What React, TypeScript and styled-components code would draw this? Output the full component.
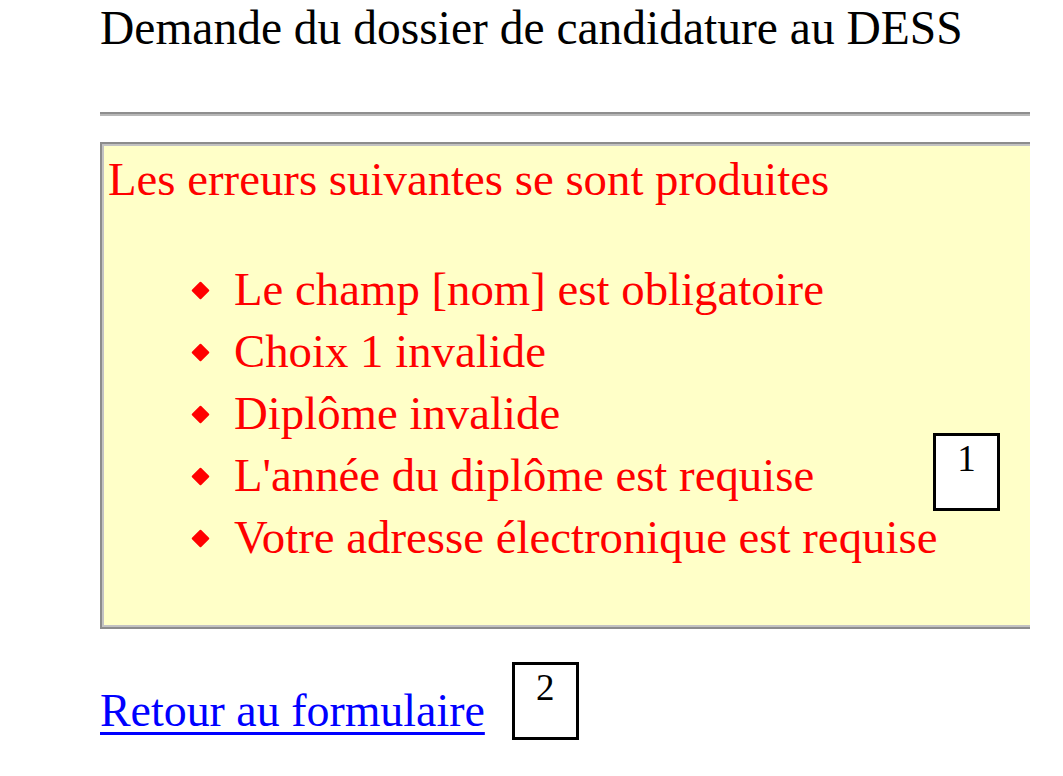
import React from "react";
import styled, { createGlobalStyle } from "styled-components";

const GlobalStyle = createGlobalStyle`
  html, body {
    margin: 0;
    padding: 0;
    background: #ffffff;
  }
  body {
    font-family: "Liberation Serif", "Times New Roman", serif;
  }
`;

const errors = [
  "Le champ [nom] est obligatoire",
  "Choix 1 invalide",
  "Diplôme invalide",
  "L'année du diplôme est requise",
  "Votre adresse électronique est requise",
];

const Page = styled.div`
  width: 1030px;
  overflow: hidden;
  padding-left: 100px;
  box-sizing: border-box;
`;

const Title = styled.div`
  font-size: 47.5px;
  line-height: 56px;
  color: #000000;
  white-space: nowrap;
`;

const Rule = styled.div`
  margin-top: 56px;
  height: 0;
  border-top: 2px solid #8e8e8e;
  border-bottom: 2px solid #b8b8b8;
`;

const ErrorBox = styled.div`
  position: relative;
  margin-top: 26px;
  width: 1000px;
  height: 487px;
  box-sizing: border-box;
  border: 2px solid #8c8c8c;
  box-shadow: inset 0 0 0 2px #c2c2c2;
  background: #ffffc8;
  padding: 4px 6px;
  color: #ff0000;
  font-size: 46.8px;
  line-height: 62px;
`;

const ErrorList = styled.ul`
  list-style: none;
  margin: 48px 0 0 0;
  padding-left: 126px;
`;

const ErrorItem = styled.li`
  position: relative;
  white-space: nowrap;

  &::before {
    content: "";
    position: absolute;
    left: -40px;
    top: 26px;
    width: 13px;
    height: 13px;
    background: #ff0000;
    border-radius: 1px;
    transform: rotate(45deg);
  }
`;

const Marker = styled.div<{ $overlay?: boolean }>`
  ${(p) => (p.$overlay ? "position: absolute; left: 831px; top: 289px;" : "")}
  width: 67px;
  height: 78px;
  box-sizing: border-box;
  border: 3px solid #000000;
  background: #ffffff;
  color: #000000;
  font-family: "Liberation Serif", "Times New Roman", serif;
  font-size: 37px;
  line-height: 37px;
  text-align: center;
  padding-top: 4px;
  flex-shrink: 0;
`;

const Footer = styled.div`
  display: flex;
  align-items: flex-start;
  gap: 27px;
  margin-top: 33px;
`;

const BackLink = styled.a`
  margin-top: 21px;
  font-size: 45.9px;
  line-height: 56px;
  color: #0000ff;
  text-decoration: underline;
  text-decoration-thickness: 3px;
  text-underline-offset: 6px;
  white-space: nowrap;
`;

export default function App() {
  return (
    <>
      <GlobalStyle />
      <Page>
        <Title>Demande du dossier de candidature au DESS</Title>
        <Rule />
        <ErrorBox>
          Les erreurs suivantes se sont produites
          <ErrorList>
            {errors.map((e) => (
              <ErrorItem key={e}>{e}</ErrorItem>
            ))}
          </ErrorList>
          <Marker $overlay>1</Marker>
        </ErrorBox>
        <Footer>
          <BackLink href="#">Retour au formulaire</BackLink>
          <Marker>2</Marker>
        </Footer>
      </Page>
    </>
  );
}
